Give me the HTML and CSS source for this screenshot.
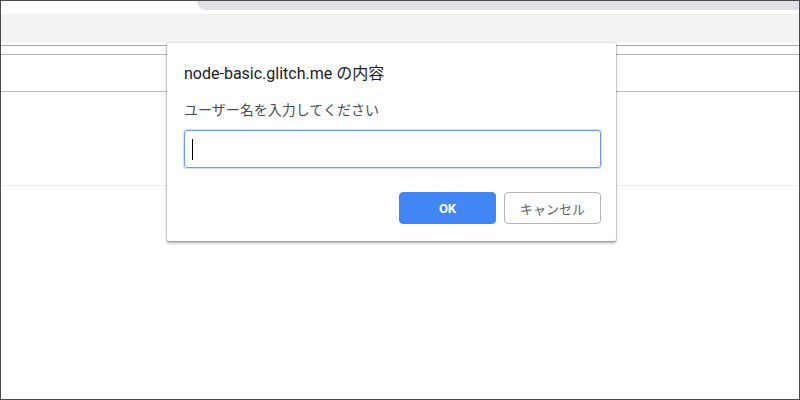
FILE: index.html
```html
<!DOCTYPE html>
<html lang="ja">
<head>
<meta charset="utf-8">
<title>prompt</title>
<link rel="stylesheet" href="styles.css">
</head>
<body>
<div class="frame">
  <div class="tabstrip"><div class="tab"></div></div>
  <div class="toolbar"></div>
  <div class="page">
    <div class="rule rule-a"></div>
    <div class="band-1"></div>
    <div class="rule rule-b"></div>
    <div class="band-2"></div>
    <div class="rule rule-c"></div>
    <div class="band-3"></div>
    <div class="rule rule-d"></div>
  </div>
  <div class="dialog">
    <div class="dlg-title">node-basic.glitch.me の内容</div>
    <div class="dlg-msg">ユーザー名を入力してください</div>
    <div class="dlg-input"><span class="caret"></span></div>
    <div class="dlg-buttons">
      <button class="btn btn-ok">OK</button>
      <button class="btn btn-cancel">キャンセル</button>
    </div>
  </div>
</div>
</body>
</html>
```
FILE: styles.css
```css
* { box-sizing: border-box; }
html, body { margin: 0; padding: 0; background: #fff; }
body { font-family: Roboto, "Noto Sans CJK JP", sans-serif; }

.frame {
  position: relative;
  width: 800px;
  height: 400px;
  border: 1px solid #4a4a4a;
  overflow: hidden;
  background: #fff;
}

.tabstrip {
  height: 13px;
  display: flex;
  padding-left: 196px;
}
.tab {
  flex: 1;
  height: 9px;
  background: #dee1e6;
  border-bottom-left-radius: 9px;
}

.toolbar {
  height: 28px;
  background: #f1f3f4;
}

.page { display: flex; flex-direction: column; }
.rule { height: 1px; }
.rule-a { margin-top: 3px; background: #a8a8a8; }
.band-1 { height: 8px; }
.rule-b { background: #b4b4b4; }
.band-2 { height: 36px; }
.rule-c { background: #bdbdbd; }
.band-3 { height: 93px; }
.rule-d { background: #ececec; }

.dialog {
  position: absolute;
  left: 166px;
  top: 42px;
  width: 449px;
  height: 198px;
  background: #fff;
  border-radius: 2px;
  box-shadow: 0 0 0 1px rgba(0,0,0,0.1), 0 2px 3px rgba(0,0,0,0.35);
  padding: 21px 15px 16px 17px;
  display: flex;
  flex-direction: column;
}
.dlg-title {
  font-size: 16px;
  line-height: 20px;
  color: #202124;
}
.dlg-msg {
  margin-top: 16px;
  font-size: 14px;
  line-height: 20px;
  color: #4a4d51;
}
.dlg-input {
  margin-top: 10px;
  height: 38px;
  border: 1px solid #6b9ce8;
  border-radius: 3px;
  box-shadow: 0 0 0 1px rgba(107,156,232,0.3);
  display: flex;
  align-items: center;
  padding-left: 7px;
}
.caret {
  width: 1px;
  height: 21px;
  background: #000;
}
.dlg-buttons {
  margin-top: 24px;
  display: flex;
  justify-content: flex-end;
  gap: 8px;
}
.btn {
  width: 97px;
  height: 32px;
  border-radius: 4px;
  font-family: Roboto, "Noto Sans CJK JP", sans-serif;
  font-size: 13px;
  padding: 0;
  cursor: default;
}
.btn-ok {
  background: #4285f4;
  border: 1px solid #4285f4;
  color: #fff;
  font-weight: 700;
}
.btn-cancel {
  background: #fff;
  border: 1px solid #b5b5b5;
  color: #5f6368;
}
```
